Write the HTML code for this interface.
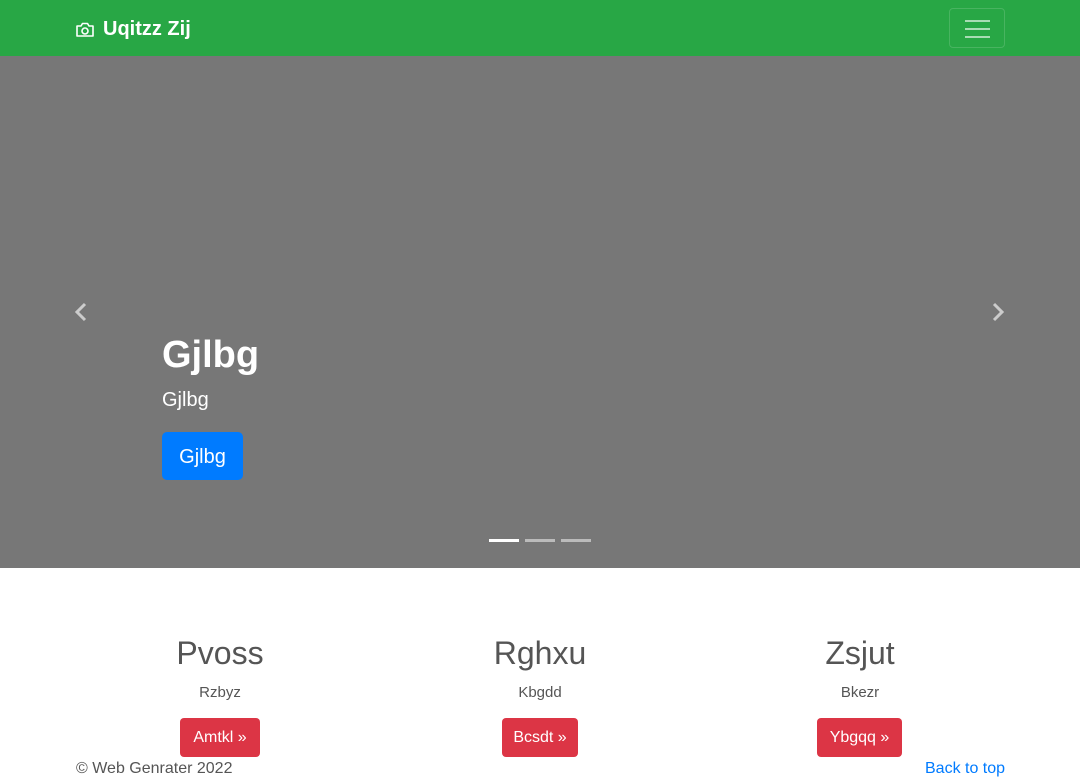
<!DOCTYPE html>
<html><head><meta charset="utf-8"><style>
*{box-sizing:border-box;margin:0;padding:0}
body{width:1080px;height:780px;overflow:hidden;font-family:"Liberation Sans",sans-serif;background:#fff;color:#555;position:relative}
.nav{position:absolute;top:0;left:0;width:1080px;height:56px;background:#28a745}
.brand{position:absolute;left:75px;top:18px;color:#fff;font-weight:bold;font-size:20px;display:flex;align-items:center;gap:8px}
.tog{position:absolute;left:949px;top:8px;width:56px;height:40px;border:1px solid rgba(255,255,255,.15);border-radius:4px}
.tog i{position:absolute;left:15px;width:25px;height:2px;background:rgba(255,255,255,.6)}
.hero{position:absolute;top:56px;left:0;width:1080px;height:512px;background:#777}
.cap{position:absolute;left:162px;color:#fff}
.btnb{position:absolute;left:162px;top:376px;width:81px;height:48px;background:#007bff;border-radius:5px;color:#fff;font-size:20px;text-align:center;line-height:50px}
.ind{position:absolute;top:483px;width:30px;height:3px;background:rgba(255,255,255,.5)}
.arrow{position:absolute;top:246px}
.col{position:absolute;top:634px;width:200px;text-align:center}
.col h2{font-size:32px;font-weight:normal;color:#555;line-height:38px}
.col p{font-size:15px;margin-top:12px}
.rb{position:absolute;top:718px;height:39px;background:#dc3545;color:#fff;border-radius:4px;font-size:16px;line-height:40px;text-align:center}
.foot{position:absolute;top:760px;font-size:16px}
</style></head><body>
<div class="nav">
<div class="brand"><svg width="20" height="18" viewBox="0 0 20 18" fill="none" stroke="#fff" stroke-width="1.6"><path d="M2 5h4l1.5-2.5h5L14 5h4v10H2z" stroke-linejoin="round"/><circle cx="10" cy="10" r="3"/></svg>Uqitzz Zij</div>
<div class="tog"><i style="top:11px"></i><i style="top:19px"></i><i style="top:27px"></i></div>
</div>
<div class="hero">
<svg class="arrow" style="left:73px" width="16" height="20" viewBox="0 0 16 20"><path d="M12 2L4 10l8 8" stroke="#ccc" stroke-width="3" fill="none"/></svg>
<svg class="arrow" style="left:990px" width="16" height="20" viewBox="0 0 16 20"><path d="M4 2l8 8-8 8" stroke="#ccc" stroke-width="3" fill="none"/></svg>
<div class="cap" style="top:278px;font-size:38px;font-weight:bold">Gjlbg</div>
<div class="cap" style="top:333px;font-size:20px">Gjlbg</div>
<div class="btnb">Gjlbg</div>
<div class="ind" style="left:489px;background:#fff"></div>
<div class="ind" style="left:525px"></div>
<div class="ind" style="left:561px"></div>
</div>
<div class="col" style="left:120px"><h2>Pvoss</h2><p>Rzbyz</p></div>
<div class="col" style="left:440px"><h2>Rghxu</h2><p>Kbgdd</p></div>
<div class="col" style="left:760px"><h2>Zsjut</h2><p>Bkezr</p></div>
<div class="rb" style="left:180px;width:80px">Amtkl »</div>
<div class="rb" style="left:502px;width:76px">Bcsdt »</div>
<div class="rb" style="left:817px;width:85px">Ybgqq »</div>
<div class="foot" style="left:76px">© Web Genrater 2022</div>
<div class="foot" style="left:925px;color:#007bff">Back to top</div>
</body></html>
